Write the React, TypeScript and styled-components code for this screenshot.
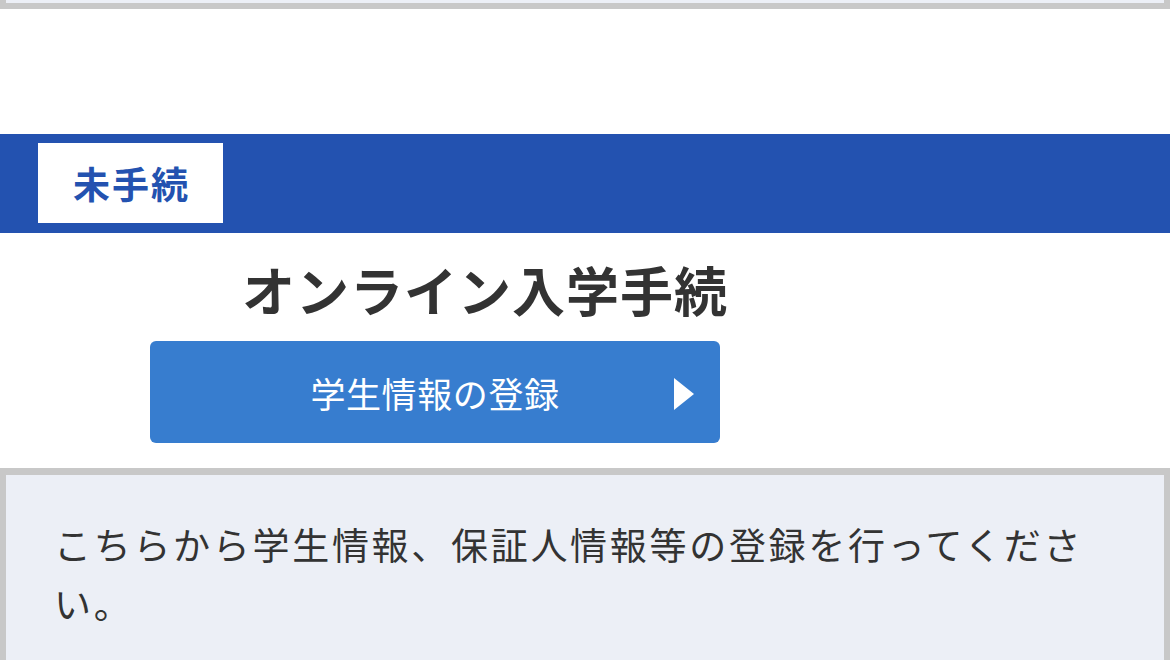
import React from "react";
import styled, { createGlobalStyle } from "styled-components";

const colors = {
  band: "#2352b0",
  button: "#377dcf",
  text: "#333333",
  panel: "#eceff6",
  border: "#c8c8c8",
  white: "#ffffff",
};

const font = `"Noto Sans CJK JP", "Noto Sans", sans-serif`;

const GlobalStyle = createGlobalStyle`
  html, body {
    margin: 0;
    padding: 0;
    background: ${colors.white};
    font-family: ${font};
  }
`;

const Page = styled.div`
  width: 1170px;
  height: 660px;
  overflow: hidden;
  display: flex;
  flex-direction: column;
`;

const Panel = styled.div<{ $tail?: boolean }>`
  background: ${colors.panel};
  border: 6px solid ${colors.border};
  border-top-width: ${(p) => (p.$tail ? "0" : "7px")};
  border-bottom-width: ${(p) => (p.$tail ? "6px" : "0")};
  height: ${(p) => (p.$tail ? "3px" : "auto")};
  flex: ${(p) => (p.$tail ? "none" : "1")};
`;

const StatusBand = styled.div`
  margin-top: 125px;
  background: ${colors.band};
  height: 99px;
  box-sizing: border-box;
  padding: 9px 0 0 38px;
  display: flex;
  align-items: flex-start;
`;

const Badge = styled.div`
  width: 185px;
  height: 80px;
  background: ${colors.white};
  color: ${colors.band};
  font-size: 37px;
  font-weight: 700;
  letter-spacing: 2px;
  text-indent: 2px;
  display: flex;
  align-items: center;
  justify-content: center;
`;

const Section = styled.div`
  display: flex;
  flex-direction: column;
  padding: 16px 0 25px 0;
`;

const Title = styled.h2`
  margin: 0;
  padding-left: 242px;
  font-size: 53px;
  line-height: 80px;
  font-weight: 700;
  letter-spacing: 1px;
  color: ${colors.text};
`;

const ActionButton = styled.button`
  position: relative;
  margin: 12px 0 0 150px;
  width: 570px;
  height: 102px;
  border: none;
  border-radius: 6px;
  background: ${colors.button};
  color: ${colors.white};
  font-family: ${font};
  font-size: 35px;
  font-weight: 400;
  letter-spacing: 0.6px;
  display: flex;
  align-items: center;
  justify-content: center;
  padding: 0;
  cursor: pointer;
`;

const Arrow = styled.svg`
  position: absolute;
  right: 26px;
  top: 37px;
`;

const Note = styled.p`
  margin: 0;
  padding: 40px 40px 0 48px;
  font-size: 37px;
  line-height: 59px;
  letter-spacing: 2.7px;
  color: ${colors.text};
`;

export default function App() {
  return (
    <>
      <GlobalStyle />
      <Page>
        <Panel $tail />
        <StatusBand>
          <Badge>未手続</Badge>
        </StatusBand>
        <Section>
          <Title>オンライン入学手続</Title>
          <ActionButton>
            学生情報の登録
            <Arrow width="20" height="32" viewBox="0 0 20 32">
              <polygon points="0,0 20,16 0,32" fill="#ffffff" />
            </Arrow>
          </ActionButton>
        </Section>
        <Panel>
          <Note>こちらから学生情報、保証人情報等の登録を行ってください。</Note>
        </Panel>
      </Page>
    </>
  );
}
